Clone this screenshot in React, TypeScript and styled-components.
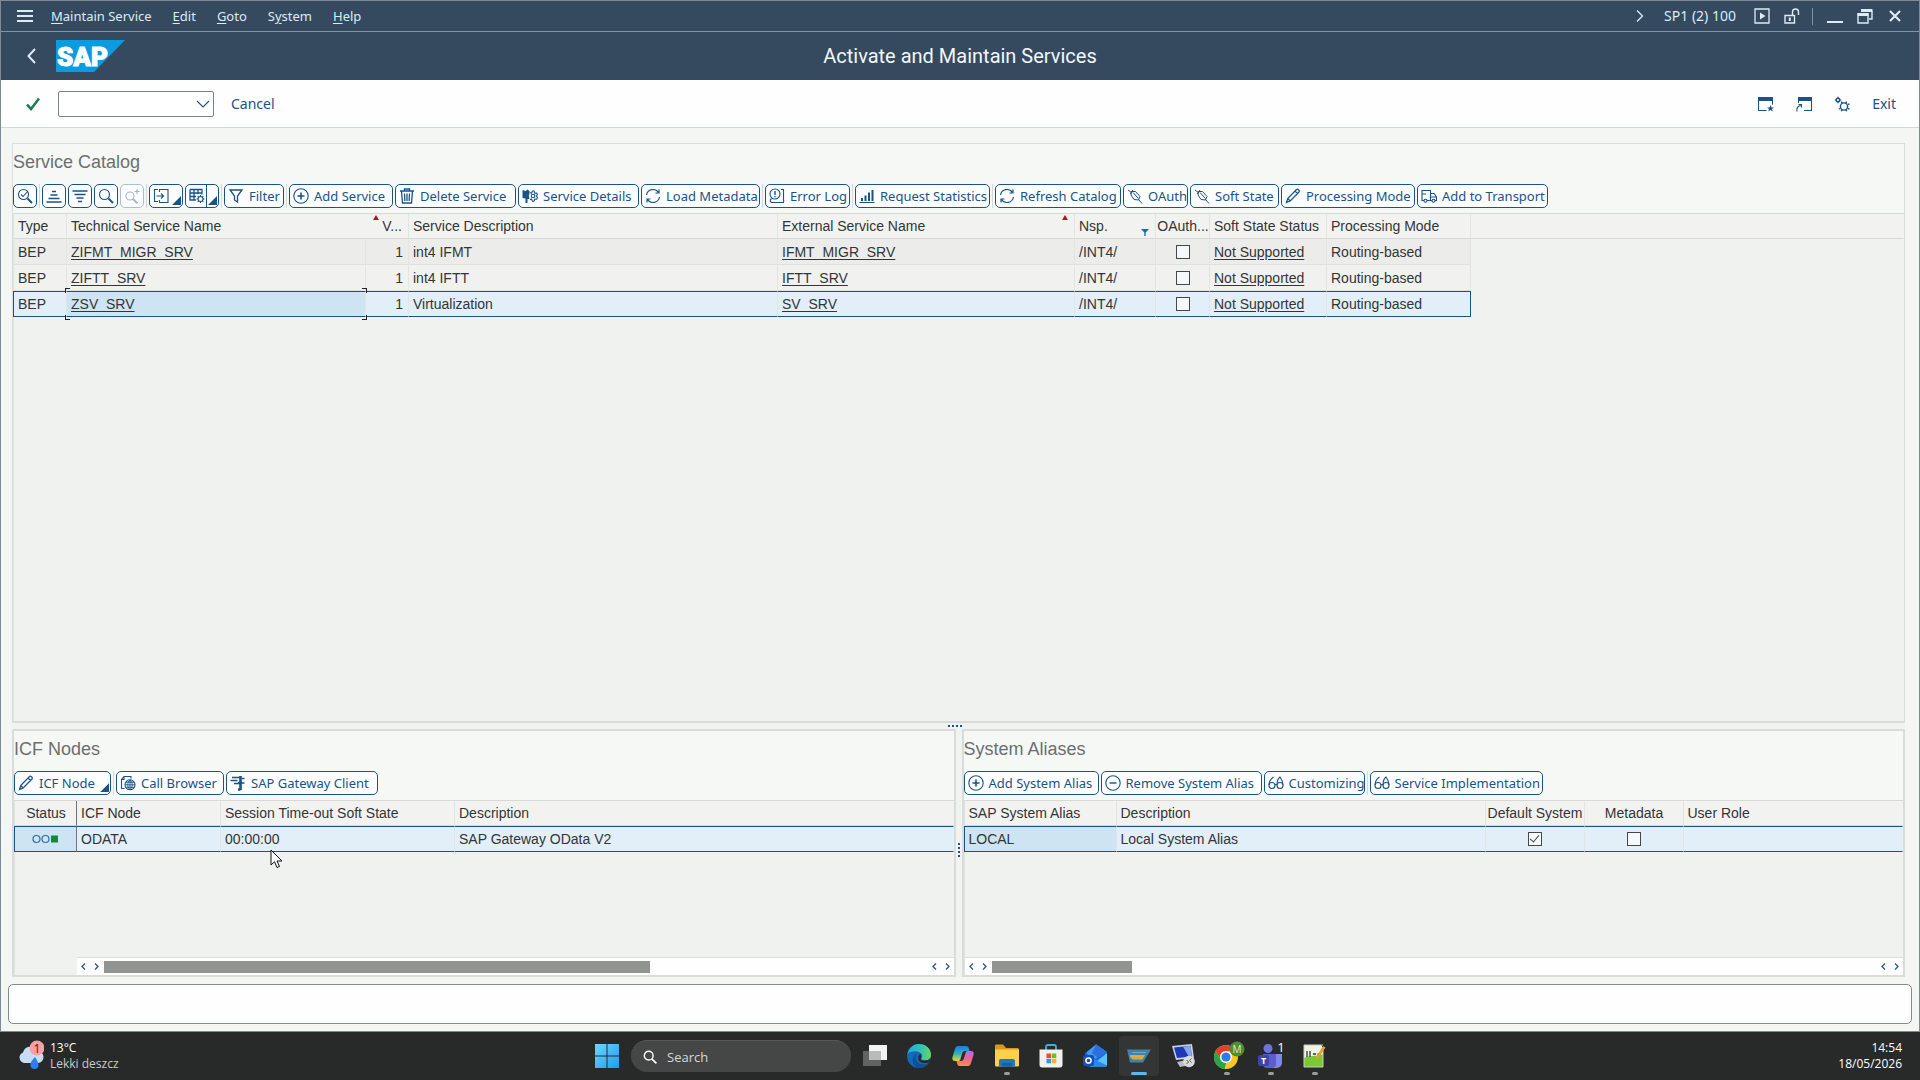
import React from "react";
import styled, { createGlobalStyle, css } from "styled-components";

const blue = "#1b5288";
const ui = `"Noto Sans", "Open Sans", sans-serif`;
const heading = `Roboto, "Open Sans", sans-serif`;
const arial = `"Liberation Sans", Arial, sans-serif`;
const segoe = `"Open Sans", "Noto Sans", sans-serif`;

const Global = createGlobalStyle`
  * { box-sizing: border-box; }
  html, body, #root { height: 100%; }
  body { margin: 0; background: #272a29; font-family: ${arial}; overflow: hidden; }
  button, input, select { font: inherit; margin: 0; }
`;

/* ---------- window ---------- */

const Screen = styled.div`
  display: flex;
  flex-direction: column;
  min-height: 100vh;
`;

const Win = styled.div`
  flex: 1;
  display: flex;
  flex-direction: column;
  border: 1px solid #7d8b99;
  background: #f4f6f4;
  color: #333536;
`;

const MenuBar = styled.header`
  height: 31px;
  display: flex;
  align-items: center;
  justify-content: space-between;
  padding: 0 16px;
  background: #354a5f;
  border-bottom: 1px solid #8296aa;
  color: #dcebf8;
  font: 13px/18px ${ui};
`;

const MenuList = styled.nav`
  display: flex;
  align-items: center;
  gap: 21px;
  & > button:first-child { margin-right: -3px; }
`;

const BareButton = styled.button`
  display: flex;
  align-items: center;
  justify-content: center;
  padding: 0;
  border: 0;
  background: none;
  color: inherit;
  cursor: pointer;
  white-space: nowrap;
  &:disabled { cursor: default; }
`;

const MenuButton = styled(BareButton)`
  display: block;
  u { text-underline-offset: 2px; }
`;

const SessionBar = styled.div`
  display: flex;
  align-items: center;
  gap: 14px;
`;

const SessionName = styled.span`
  margin: 0 4px 0 2px;
  font-size: 14px;
`;

const BarDivider = styled.span`
  width: 1px;
  height: 17px;
  margin-left: -2px;
  background: #7f93a7;
`;

const TitleBar = styled.div`
  height: 48px;
  display: grid;
  grid-template-columns: 1fr auto 1fr;
  align-items: center;
  padding: 0 24px;
  background: #354a5f;
  color: #f2f7fb;
`;

const TitleLeft = styled.div`
  display: flex;
  align-items: center;
  gap: 17px;
  color: #dcebf8;
`;

const AppTitle = styled.h1`
  margin: 0;
  font: 400 20px/28px ${heading};
`;

const CommandBar = styled.div`
  height: 48px;
  display: flex;
  align-items: center;
  justify-content: space-between;
  padding: 0 23px 0 24px;
  background: #fdfefd;
  border-bottom: 1px solid #d3d9d5;
  color: ${blue};
  font: 14px/20px ${ui};
`;

const CommandLeft = styled.div`
  display: flex;
  align-items: center;
  gap: 17px;
`;

const CommandRight = styled.div`
  display: flex;
  align-items: center;
  gap: 22px;
`;

const Combo = styled.div`
  display: grid;
  width: 156px;
  height: 26px;
  align-items: center;
  & > * { grid-area: 1 / 1; }
  & > svg { justify-self: end; margin-right: 4px; pointer-events: none; }
`;

const ComboSelect = styled.select`
  width: 100%;
  height: 100%;
  appearance: none;
  border: 1px solid #7d8286;
  border-radius: 2px;
  background: #fff;
`;

const Main = styled.main`
  flex: 1;
  display: flex;
  flex-direction: column;
  padding: 15px 14px 7px 11px;
`;

const Panel = styled.section<{ $grow: number; $heavy?: boolean }>`
  flex: ${(p) => p.$grow} 1 0;
  min-width: 0;
  display: flex;
  flex-direction: column;
  background: #f6f8f6;
  border: ${(p) => (p.$heavy ? 2 : 1)}px solid #d9dcd9;
  border-bottom-width: 2px;
`;

const PanelTitle = styled.h2`
  margin: 0;
  height: 40px;
  font: 400 18px/37px ${arial};
  color: #6c6f70;
`;

const ToolRow = styled.div`
  display: flex;
  gap: 2px;
  height: 24px;
  margin-bottom: 5px;
`;

const Sep = styled.span`
  width: 1px;
  background: #d5dade;
`;

const ToolButton = styled.button<{ $w: number; $icon?: boolean }>`
  flex: none;
  width: ${(p) => p.$w}px;
  height: 24px;
  display: flex;
  align-items: center;
  gap: ${(p) => (p.$icon ? 1 : 5)}px;
  padding: 0 0 0 3px;
  border: 1px solid ${blue};
  border-radius: 5px;
  background: #fcfeff;
  color: ${blue};
  font: 13px/20px ${ui};
  white-space: nowrap;
  cursor: pointer;
  svg { flex: none; }
  &:disabled { color: #9db6cd; border-color: #a9bfd3; cursor: default; }
`;

const Corner = styled.span`
  flex: none;
  align-self: flex-end;
  margin: 0 1px 2px auto;
  width: 9px;
  height: 9px;
  background: ${blue};
  clip-path: polygon(100% 0, 100% 100%, 0 100%);
`;

const SplitLine = styled.span`
  flex: none;
  align-self: stretch;
  width: 1px;
  background: ${blue};
`;

/* ---------- grids ---------- */

const GridArea = styled.div`
  flex: 1;
  display: flex;
  flex-direction: column;
  background: #f0f2f0;
  border-top: 1px solid #d6d9d6;
  border-left: 1px solid #dfe2df;
`;

const Table = styled.table`
  width: 100%;
  table-layout: fixed;
  border-collapse: separate;
  border-spacing: 0;
  font: 14px/18px ${arial};
`;

type CellProps = { $align?: string; $dark?: boolean; $plain?: boolean };

const cell = css<CellProps>`
  padding: 0 5px 0 4px;
  text-align: ${(p) => p.$align || "left"};
  font-weight: 400;
  white-space: nowrap;
  overflow: hidden;
  border-right: 1px solid ${(p) => (p.$plain ? "transparent" : p.$dark ? "#6f767b" : "#e2e5e2")};
`;

const Th = styled.th<CellProps>`
  ${cell}
  height: 25px;
  padding-right: 0;
  padding-left: ${(p) => (p.$align === "center" ? 1 : 4)}px;
  background: #f2f3f1;
  border-bottom: 1px solid #d6d9d6;
`;

const Td = styled.td<CellProps>`
  ${cell}
  height: 26px;
  border-bottom: 1px solid ${(p) => (p.$plain ? "transparent" : "#dfe1df")};
`;

const Row = styled.tr<{ $shade?: boolean; $selected?: boolean }>`
  ${Td}:not(:last-child) { background: ${(p) => (p.$shade ? "#ecedeb" : "#f1f2f0")}; }
  ${(p) =>
    p.$selected &&
    css`
      ${Td}:not(:last-child) {
        background: #e2eff8;
        border-top: 1px solid ${blue};
        border-bottom: 1px solid ${blue};
      }
      ${Td}:first-child { box-shadow: -1px 0 0 ${blue}; }
    `}
`;

const FullRow = styled(Row)`
  && ${Td} {
    background: #e2eff8;
    border-top: 1px solid ${blue};
    border-bottom: 1px solid ${blue};
  }
  && ${Td}:first-child {
    background: #cfe4f3;
    box-shadow: -1px 0 0 ${blue};
  }
`;

const CheckCell = styled(Td)`
  padding-right: 4px;
`;

const ActiveCell = styled(Td)`
  position: relative;
  overflow: visible;
  ${Row} &&&:not(:last-child) { background: #cfe4f3; }
`;

const EndCell = styled(Td)`
  ${Row} &&& { border-right-color: ${blue}; }
`;

const Bracket = styled.span<{ $v: "top" | "bottom"; $h: "left" | "right" }>`
  position: absolute;
  width: 5px;
  height: 5px;
  border: 0 solid #222;
  ${(p) => p.$v}: -4px;
  ${(p) => p.$h}: -2px;
  border-${(p) => p.$v}-width: 1px;
  border-${(p) => p.$h}-width: 1px;
`;

const HeadFlex = styled.span`
  display: flex;
  align-items: center;
  justify-content: space-between;
  height: 24px;
  padding-right: 6px;
  & > svg { align-self: flex-end; }
`;

const SortMark = styled.span`
  align-self: flex-start;
  margin: 1px 0 0 3px;
  border: solid transparent;
  border-width: 0 3px 5px;
  border-bottom-color: #b3142b;
`;

const CellLink = styled.a`
  color: inherit;
  text-decoration: underline;
  text-underline-offset: 2px;
`;

const Check = styled.input.attrs({ type: "checkbox" })`
  appearance: none;
  display: block;
  width: 14px;
  height: 14px;
  margin: 0 auto;
  border: 1px solid #44484b;
  background: #f6f8f9;
  &:checked::after {
    content: "";
    display: block;
    width: 4px;
    height: 8px;
    margin: 0 auto;
    border: solid #44484b;
    border-width: 0 1px 1px 0;
    transform: rotate(40deg);
  }
`;

const Lamps = styled.span`
  display: flex;
  align-items: center;
  justify-content: center;
`;

/* ---------- splitters and scroll bars ---------- */

const Dots = styled.div<{ $vertical?: boolean }>`
  flex: none;
  display: flex;
  flex-direction: ${(p) => (p.$vertical ? "column" : "row")};
  align-items: center;
  justify-content: center;
  gap: 2px;
  ${(p) => (p.$vertical ? "width: 6px; padding-bottom: 6px;" : "height: 6px; padding-right: 8px;")}
  background: #f1f3f1;
  i { width: 2px; height: 2px; background: ${blue}; }
`;

const Lower = styled.div`
  flex: 249 1 0;
  display: flex;
`;

const ScrollRow = styled.div<{ $inset: number }>`
  display: flex;
  align-items: center;
  height: 18px;
  margin-top: auto;
  margin-left: ${(p) => p.$inset}px;
  border-top: 1px solid #dcdfdc;
  background: #fdfefd;
  color: #3b5a78;
`;

const Arrow = styled(BareButton)`
  width: 13px;
  height: 13px;
`;

const Track = styled.div`
  flex: 1;
  margin: 0 9px 0 1px;
`;

const Thumb = styled.div`
  height: 12px;
  background: #929491;
`;

const StatusBar = styled.footer`
  height: 40px;
  margin: 0 7px 7px;
  border: 1px solid #868b8e;
  border-radius: 5px;
  background: #fdfefd;
`;

/* ---------- taskbar ---------- */

const Taskbar = styled.footer`
  height: 48px;
  display: grid;
  grid-template-columns: 1fr auto 1fr;
  align-items: center;
  background: #272a29;
  color: #fff;
  font: 12px/16px ${segoe};
`;

const Weather = styled(BareButton)`
  justify-self: start;
  padding-left: 18px;
  gap: 6px;
  text-align: left;
`;

const Dim = styled.span`
  display: block;
  color: #c9cbca;
`;

const Dock = styled.div`
  display: flex;
  align-items: center;
  height: 100%;
  padding-left: 2px;
`;

const DockItem = styled(BareButton)<{ $mark?: "dot" | "bar" }>`
  position: relative;
  width: 44px;
  height: 48px;
  ${(p) =>
    p.$mark &&
    css`
      &::after {
        content: "";
        position: absolute;
        bottom: 5px;
        width: ${p.$mark === "bar" ? 16 : 6}px;
        height: 3px;
        border-radius: 2px;
        background: ${p.$mark === "bar" ? "#5fb8ea" : "#9a9c9b"};
      }
    `}
  ${(p) =>
    p.$mark === "bar" &&
    css`
      width: 40px;
      height: 40px;
      margin: 0 2px;
      border-radius: 4px;
      background: #333635;
      &::after { bottom: 1px; }
    `}
`;

const SearchBox = styled.label`
  display: flex;
  align-items: center;
  gap: 10px;
  width: 220px;
  height: 32px;
  margin: 0 2px;
  padding: 0 12px;
  border-radius: 16px;
  background: #454746;
  border-top: 1px solid #575958;
  input {
    width: 100%;
    border: 0;
    outline: 0;
    padding: 0;
    background: none;
    color: #fff;
    font: 13px/20px ${segoe};
  }
  input::placeholder { color: #d6d7d6; opacity: 1; }
`;

const Clock = styled(BareButton)`
  display: block;
  justify-self: end;
  padding-right: 18px;
  text-align: right;
`;

const Pointer = styled.svg`
  position: fixed;
  left: 270px;
  top: 849px;
  pointer-events: none;
`;

/* ---------- icons ---------- */

const I = ({ children, w = 16, h = 16, sw = 1.1 }: { children: React.ReactNode; w?: number; h?: number; sw?: number }) => (
  <svg width={w} height={h} viewBox={`0 0 ${w} ${h}`} fill="none" stroke="currentColor" strokeWidth={sw} aria-hidden="true">
    {children}
  </svg>
);

const icons = {
  details: (
    <I><circle cx="6.5" cy="6.5" r="5" /><path d="M4 6.5l2 2 5-5.5" /><path d="M10.5 10.5l4.500 4.500" strokeWidth="2" /></I>
  ),
  sortUp: <I><path d="M6 3.500h4M4.500 7h7M2.500 10.500h11M0.500 14h15" strokeWidth="1.300" /></I>,
  sortDown: <I><path d="M0.500 3h15M2.500 6.500h11M4.500 10h7M6 13.500h4" strokeWidth="1.300" /></I>,
  find: <I><circle cx="6.500" cy="6.500" r="5" /><path d="M10.500 10.500l4.500 4.500" strokeWidth="2" /></I>,
  findNext: <I><circle cx="6" cy="8" r="4" /><path d="M9 11l4.500 4.500" strokeWidth="1.800" /><path d="M13 1v5M10.500 3.500h5" /></I>,
  exportIcon: <I><path d="M5 1.500H1.500v12H5M6.500 4V1.500h8.500v13H6.500V12M3.500 8h7M8 5.500L10.500 8 8 10.500" /></I>,
  layout: (
    <I><path d="M1 1.500h12v5M1 1.500v10.500h6M1 5h12M1 8.500h6M5 1.500V12M9 1.500V6" strokeWidth="1.300" /><circle cx="11.500" cy="11" r="2.500" /><path d="M11.500 7v1.500M11.500 13.500V15M7.500 11H9M14 11h1.500M8.700 8.200l1 1M13.300 12.800l1 1M14.300 8.200l-1 1M9.700 12.800l-1 1" /></I>
  ),
  filter: <I><path d="M2 2h12L9.500 8v6L6.500 12V8z" strokeWidth="1.300" /></I>,
  add: <I><circle cx="8" cy="8" r="7.200" /><path d="M8 4.500v7M4.500 8h7" strokeWidth="1.600" /></I>,
  remove: <I><circle cx="8" cy="8" r="7.200" /><path d="M4.500 8h7" strokeWidth="1.400" /></I>,
  trash: <I><path d="M1 3h14M5.500 3V1h5v2M2.500 3l1 12h9l1-12M5.500 5.500l.4 7.500M8 5.500V13M10.500 5.500l-.4 7.500" strokeWidth="1.300" /></I>,
  serviceDetails: (
    <I><path d="M0.500 2l3 1 2-1.500 2 1.500v3L6.800 7.500 7.500 11H5.500v4h-2v-4.500l-3-.5z" fill="currentColor" stroke="none" /><circle cx="11" cy="8" r="1.800" /><path d="M8 4.500l1.500.7 1-2.200h1.500l.7 2.200 2-.2.800 1.500-1.300 1.500 1.300 1.500-.8 1.700-2-.2-.7 2.200h-1.500l-1-2.200-1.500.7" /></I>
  ),
  refresh: <I><path d="M1.500 7a6.600 6.600 0 0 1 12-2.500M14 1.500v3.500h-3.500M14.500 9a6.600 6.600 0 0 1-12 2.500M2 14.500V11h3.500" strokeWidth="1.200" /></I>,
  errorLog: <I><path d="M12 1.500h2.500v10c0 1 .5 1.500 0 3H2.500c-1.200-.5-1.500-1.500-1-3l1-1" /><circle cx="6" cy="6" r="5" /><path d="M6 3v4M6 8v1.200" strokeWidth="1.400" /></I>,
  stats: <I><path d="M0.500 14.500h15" /><path d="M3 13v-3M6.500 13V7.500M10 13V4.500M13.500 13V2" strokeWidth="2" /></I>,
  plug: <I><path d="M1 2l3.500 2.500M4.500 3.500h4l4.500 5-1.500 3.500-4.500-.5-3-4.500zM6 2l-3 4M11 11l4 4.500M6 4.500l5.500 6" strokeWidth="1" /></I>,
  pencil: <I><path d="M1.500 14.500l1.200-4L11.500 1.500c1.200-1 3.500 1 2.500 2.500L5.200 13zM10 3l2.800 2.800M2.700 10.500L5.200 13" strokeWidth="1.200" /></I>,
  truck: <I><path d="M3 12.500H1V2.500h8.500v10H6M9.500 5.500h3.500l2.500 3.500v3.500h-1.500M9.500 12.500H11M9.500 9h6M1 6h4" /><circle cx="4.500" cy="12.800" r="1.500" /><circle cx="12.500" cy="12.800" r="1.500" /></I>,
  browser: <I><path d="M4.500 13.500h-3v-9L4 1.500h7v2M1.500 4.500H4V1.500" /><circle cx="10" cy="9.800" r="5" /><path d="M5 9.800h10M10 4.800v10M6 7.200h8M6 12.300h8M10 4.800c-3 3-3 7 0 10M10 4.800c3 3 3 7 0 10" strokeWidth=".9" /></I>,
  gateway: <I><path d="M2 2.500h8M0.500 5.500h7M4 8.500h4" strokeWidth="1.500" /><path d="M10.500 1v14M8 8h4M10.500 14.500H8" strokeWidth="2.600" /><path d="M12 3.500h2.500M12 8h2.500" strokeWidth="1.400" /></I>,
  glasses: <I><circle cx="4" cy="10.500" r="3" /><circle cx="12" cy="10.500" r="3" /><path d="M7 10c.5-.7 1.500-.7 2 0M1 10c0-3 1.500-6 4.500-8M9 10c0-4 1-6.500 3-8 1.500 2 3 5 3 8" /></I>,
};

const chevronDown = <I w={14} h={14}><path d="M1 4l6 6 6-6" /></I>;
const left = <I w={9} h={9} sw={1.4}><path d="M6 1.500L3 4.500l3 3" /></I>;
const right = <I w={9} h={9} sw={1.4}><path d="M3 1.500l3 3-3 3" /></I>;

/* ---------- content ---------- */

const menus = [
  ["", "M", "aintain Service"],
  ["", "E", "dit"],
  ["", "G", "oto"],
  ["S", "y", "stem"],
  ["", "H", "elp"],
];

type Tool = { label: string; icon: React.ReactNode; w: number; menu?: boolean } | null;

const catalogTools: Tool[] = [
  { label: "Filter", icon: icons.filter, w: 60 },
  null,
  { label: "Add Service", icon: icons.add, w: 104 },
  { label: "Delete Service", icon: icons.trash, w: 121 },
  { label: "Service Details", icon: icons.serviceDetails, w: 121 },
  { label: "Load Metadata", icon: icons.refresh, w: 119 },
  null,
  { label: "Error Log", icon: icons.errorLog, w: 85 },
  null,
  { label: "Request Statistics", icon: icons.stats, w: 135 },
  null,
  { label: "Refresh Catalog", icon: icons.refresh, w: 126 },
  { label: "OAuth", icon: icons.plug, w: 65 },
  { label: "Soft State", icon: icons.plug, w: 89 },
  { label: "Processing Mode", icon: icons.pencil, w: 134 },
  { label: "Add to Transport", icon: icons.truck, w: 131 },
];

const nodeTools: Tool[] = [
  { label: "ICF Node", icon: icons.pencil, w: 97, menu: true },
  null,
  { label: "Call Browser", icon: icons.browser, w: 108 },
  { label: "SAP Gateway Client", icon: icons.gateway, w: 152 },
];

const aliasTools: Tool[] = [
  { label: "Add System Alias", icon: icons.add, w: 135 },
  { label: "Remove System Alias", icon: icons.remove, w: 161 },
  { label: "Customizing", icon: icons.glasses, w: 101 },
  null,
  { label: "Service Implementation", icon: icons.glasses, w: 173 },
];

const services = [
  { name: "ZIFMT_MIGR_SRV", desc: "int4 IFMT", ext: "IFMT_MIGR_SRV" },
  { name: "ZIFTT_SRV", desc: "int4 IFTT", ext: "IFTT_SRV" },
  { name: "ZSV_SRV", desc: "Virtualization", ext: "SV_SRV" },
];

const Tools = ({ items }: { items: Tool[] }) => (
  <>
    {items.map((t, i) =>
      t ? (
        <ToolButton key={i} $w={t.w}>
          {t.icon}
          {t.label}
          {t.menu && <Corner />}
        </ToolButton>
      ) : (
        <Sep key={i} />
      )
    )}
  </>
);

const Cols = ({ widths }: { widths: number[] }) => (
  <colgroup>
    {widths.map((w, i) => (
      <col key={i} style={{ width: w }} />
    ))}
    <col />
  </colgroup>
);

const Scroll = ({ inset, size }: { inset: number; size: number }) => (
  <ScrollRow $inset={inset}>
    <Arrow aria-label="Scroll to start">{left}</Arrow>
    <Arrow aria-label="Scroll left">{right}</Arrow>
    <Track>
      <Thumb style={{ width: `${size}%` }} />
    </Track>
    <Arrow aria-label="Scroll right">{left}</Arrow>
    <Arrow aria-label="Scroll to end">{right}</Arrow>
  </ScrollRow>
);

const SapLogo = () => (
  <svg width="69" height="32" viewBox="0 0 69 32" role="img" aria-label="SAP">
    <path d="M0 0h69L38 32H0z" fill="#0a9be0" />
    <text x="1" y="26" fill="#fff" stroke="#fff" strokeWidth="1" fontFamily="Roboto" fontWeight="900" fontSize="26">SAP</text>
  </svg>
);

const ServiceCatalog = () => (
  <Panel $grow={580}>
    <PanelTitle>Service Catalog</PanelTitle>
    <ToolRow>
      <ToolButton $w={24} aria-label="Details">{icons.details}</ToolButton>
      <Sep />
      <ToolButton $w={24} aria-label="Sort ascending">{icons.sortUp}</ToolButton>
      <ToolButton $w={24} aria-label="Sort descending">{icons.sortDown}</ToolButton>
      <ToolButton $w={24} aria-label="Find">{icons.find}</ToolButton>
      <ToolButton $w={24} aria-label="Find next" disabled>{icons.findNext}</ToolButton>
      <Sep />
      <ToolButton $w={34} $icon aria-label="Export">{icons.exportIcon}<Corner /></ToolButton>
      <ToolButton $w={34} $icon aria-label="Layout">
        {icons.layout}
        <SplitLine />
        <Corner />
      </ToolButton>
      <Sep />
      <Tools items={catalogTools} />
    </ToolRow>
    <GridArea>
      <Table>
        <Cols widths={[53, 299, 43, 369, 297, 81, 54, 117, 144]} />
        <thead>
          <tr>
            <Th>Type</Th>
            <Th $plain>Technical Service Name</Th>
            <Th><HeadFlex><SortMark />V...</HeadFlex></Th>
            <Th>Service Description</Th>
            <Th><HeadFlex>External Service Name<SortMark /></HeadFlex></Th>
            <Th>
              <HeadFlex>
                Nsp.
                <svg width="8" height="9" viewBox="0 0 8 9" aria-hidden="true"><path d="M0 0h8L4.700 3.500V7H3.300V3.500z" fill="#1f66ae" /></svg>
              </HeadFlex>
            </Th>
            <Th $align="center">OAuth...</Th>
            <Th>Soft State Status</Th>
            <Th>Processing Mode</Th>
            <Th $plain />
          </tr>
        </thead>
        <tbody>
          {services.map((s, i) => {
            const Name = i === 2 ? ActiveCell : Td;
            const End = i === 2 ? EndCell : Td;
            return (
              <Row key={s.name} $shade={i === 0} $selected={i === 2}>
                <Td>BEP</Td>
                <Name>
                  <CellLink href="#service">{s.name}</CellLink>
                  {i === 2 && (
                    <>
                      <Bracket $v="top" $h="left" />
                      <Bracket $v="top" $h="right" />
                      <Bracket $v="bottom" $h="left" />
                      <Bracket $v="bottom" $h="right" />
                    </>
                  )}
                </Name>
                <Td $align="right">1</Td>
                <Td>{s.desc}</Td>
                <Td><CellLink href="#external">{s.ext}</CellLink></Td>
                <Td>/INT4/</Td>
                <CheckCell><Check aria-label={`OAuth for ${s.name}`} /></CheckCell>
                <Td><CellLink href="#state">Not Supported</CellLink></Td>
                <End>Routing-based</End>
                <Td $plain />
              </Row>
            );
          })}
        </tbody>
      </Table>
    </GridArea>
  </Panel>
);

const IcfNodes = () => (
  <Panel $grow={1} $heavy>
    <PanelTitle>ICF Nodes</PanelTitle>
    <ToolRow><Tools items={nodeTools} /></ToolRow>
    <GridArea>
      <Table>
        <Cols widths={[62, 144, 234]} />
        <thead>
          <tr>
            <Th $dark $align="center">Status</Th>
            <Th>ICF Node</Th>
            <Th>Session Time-out Soft State</Th>
            <Th $plain>Description</Th>
          </tr>
        </thead>
        <tbody>
          <FullRow>
            <Td $dark>
              <Lamps>
                <svg width="26" height="10" viewBox="0 0 26 10" role="img" aria-label="Active">
                  <g fill="none" stroke="#2f6d9f" strokeWidth="1.200"><circle cx="4.500" cy="5" r="3.500" /><circle cx="13.500" cy="5" r="3.500" /></g>
                  <path d="M19 1.500h7v7h-7z" fill="#188541" />
                </svg>
              </Lamps>
            </Td>
            <Td>ODATA</Td>
            <Td>00:00:00</Td>
            <Td $plain>SAP Gateway OData V2</Td>
          </FullRow>
        </tbody>
      </Table>
      <Scroll inset={62} size={67} />
    </GridArea>
  </Panel>
);

const SystemAliases = () => (
  <Panel $grow={1} $heavy>
    <PanelTitle>System Aliases</PanelTitle>
    <ToolRow><Tools items={aliasTools} /></ToolRow>
    <GridArea>
      <Table>
        <Cols widths={[152, 369, 99, 99]} />
        <thead>
          <tr>
            <Th>SAP System Alias</Th>
            <Th>Description</Th>
            <Th $align="center">Default System</Th>
            <Th $align="center">Metadata</Th>
            <Th $plain>User Role</Th>
          </tr>
        </thead>
        <tbody>
          <FullRow>
            <Td>LOCAL</Td>
            <Td>Local System Alias</Td>
            <CheckCell><Check aria-label="Default system" defaultChecked /></CheckCell>
            <CheckCell><Check aria-label="Metadata" /></CheckCell>
            <Td $plain />
          </FullRow>
        </tbody>
      </Table>
      <Scroll inset={0} size={16} />
    </GridArea>
  </Panel>
);

const Art = ({ children }: { children: React.ReactNode }) => (
  <svg width="26" height="26" viewBox="0 0 26 26" aria-hidden="true">{children}</svg>
);

const dock: { label: string; mark?: "dot" | "bar"; art: React.ReactNode }[] = [
  {
    label: "Task view",
    art: (
      <Art>
        <path d="M7 2h18v15H7z" fill="#f3f3f3" />
        <path d="M1 8h18v15H1z" fill="#6b6d6c" opacity=".85" />
        <path d="M7 8h12v9H7z" fill="#b9bab9" />
      </Art>
    ),
  },
  {
    label: "Edge",
    art: (
      <Art>
        <defs>
          <linearGradient id="edgeTop" x1="0" x2="1"><stop offset="0" stopColor="#27a7df" /><stop offset=".6" stopColor="#35c3b3" /><stop offset="1" stopColor="#6ad95a" /></linearGradient>
        </defs>
        <circle cx="13" cy="13" r="12" fill="#1169b8" />
        <path d="M1.500 11C3 4 8 1 13 1c7 0 12 5 12 10.500 0 4-3 6-6 6s-4.500-1-3.500-2.500C17 13 15 9 11 8.500 7 8 3 9 1.500 11z" fill="url(#edgeTop)" />
        <path d="M11 10.500c-3 3-1 9 3.500 10.500 3 1 6 .5 8.500-1.500C20 24 16 25.500 12 25c-4-.7-6-6-5-9.500.6-2.500 2-4.500 4-5z" fill="#0f4f97" />
        <path d="M14.500 10.500c1.500 1.500 1 3.500.5 4.500-.8 1.500 1 2.500 3.500 2.500 3 0 5-.8 6-2.500l-1 4c-3 1.500-8 2-10.500-1.500-1.500-2.500-.5-5.500 1.500-7z" fill="#272a29" />
      </Art>
    ),
  },
  {
    label: "Copilot",
    art: (
      <Art>
        <defs>
          <linearGradient id="copA" x2="0" y2="1"><stop offset="0" stopColor="#2376e8" /><stop offset=".5" stopColor="#2fb4b8" /><stop offset="1" stopColor="#e8d52f" /></linearGradient>
          <linearGradient id="copB" x2="0" y2="1"><stop offset="0" stopColor="#b46be8" /><stop offset=".5" stopColor="#f0609a" /><stop offset="1" stopColor="#f79240" /></linearGradient>
        </defs>
        <path d="M8 3h8c2 0 2.500 1 3 3l.5 2h-4c-2 0-3 1-3.500 3l-1.500 5c-.5 1.500-1 2-2.500 2H5c-2.500 0-3-2-2.500-4l2.500-8c.6-2 1.500-3 3-3z" fill="url(#copA)" />
        <path d="M18 23h-8c-2 0-2.500-1-3-3l-.5-2h4c2 0 3-1 3.500-3l1.500-5c.5-1.500 1-2 2.500-2H21c2.500 0 3 2 2.500 4L21 20c-.6 2-1.500 3-3 3z" fill="url(#copB)" />
      </Art>
    ),
  },
  {
    label: "File Explorer",
    mark: "dot",
    art: (
      <Art>
        <path d="M1 3c0-1 .5-1.500 1.500-1.500H9L12 5h11c1 0 2 .5 2 1.500V12H1z" fill="#d99a1c" />
        <path d="M1 6.500h24V22c0 1-.5 1.500-1.500 1.500h-21C1.500 23.500 1 23 1 22z" fill="#fcd04d" />
        <path d="M5 18c0-1.500 1-2 2-2h12c1 0 2 .5 2 2v5.500H5z" fill="#1a79c4" />
        <path d="M8 20h10v3.500H8z" fill="#1561a3" />
      </Art>
    ),
  },
  {
    label: "Store",
    art: (
      <Art>
        <path d="M8 7V4c0-1.500.8-2 2-2h6c1.200 0 2 .5 2 2v3" fill="none" stroke="#38b0e6" strokeWidth="1.800" />
        <path d="M1.500 6.500h23V22c0 1.500-1 2.500-2.500 2.500H4c-1.500 0-2.500-1-2.500-2.500z" fill="#f0f0ee" />
        <path d="M8.500 10.500H13V15H8.500z" fill="#e8502c" /><path d="M13.800 10.500h4.500V15h-4.500z" fill="#79b72a" />
        <path d="M8.500 15.800H13v4.500H8.500z" fill="#2a9be0" /><path d="M13.800 15.800h4.500v4.500h-4.500z" fill="#f4b51e" />
      </Art>
    ),
  },
  {
    label: "Outlook",
    art: (
      <Art>
        <path d="M3 10L14 1.500 25 9v13c0 1-.6 1.500-1.500 1.500H5z" fill="#1769cf" />
        <path d="M5 9l9-7.500L22 7l-8 9-9-5z" fill="#3f9af0" />
        <path d="M14 1.500L25 9l-9 6-6-5z" fill="#2c6fe0" />
        <path d="M25 10v12c0 1-.6 1.500-1.500 1.500H8z" fill="#5cc3fa" />
        <path d="M10 15l15 7.500c-.4.700-.9 1-1.500 1H8z" fill="#2f86e8" />
        <rect x="1" y="12" width="11" height="11" rx="2" fill="#1450b4" />
        <circle cx="6.500" cy="17.500" r="2.600" fill="none" stroke="#fff" strokeWidth="1.500" />
      </Art>
    ),
  },
  {
    label: "SAP Logon",
    mark: "bar",
    art: (
      <Art>
        <path d="M1 6.500h24L17 19.500H4z" fill="#3f83a6" />
        <path d="M4 12h15l-2.500 4.500H7L4 14z" fill="#e3a83a" />
        <path d="M6 9.500h14" stroke="#74a9c2" strokeWidth="1" />
      </Art>
    ),
  },
  {
    label: "Remote Desktop",
    art: (
      <Art>
        <path d="M2 3l20-2 2 14-18 2z" fill="#c9d3e4" />
        <path d="M4 4.500l16.500-1.700L22 13.500 7 15z" fill="#2038b8" />
        <path d="M13 3.700l7.500-.9L22 13.500l-3 .3z" fill="#8aa5ee" />
        <path d="M7 19l9-2 4 5-10 2z" fill="#b9bdc4" />
        <circle cx="19" cy="18.500" r="5.800" fill="#dadcdb" />
        <path d="M16.500 17l2 2-2 2M21.500 15.500l-2 2 2 2" stroke="#555" fill="none" />
      </Art>
    ),
  },
  {
    label: "Chrome",
    mark: "dot",
    art: (
      <svg width="36" height="30" viewBox="-5 0 36 30" aria-hidden="true">
        <circle cx="12" cy="16" r="12" fill="#f9c71f" />
        <path d="M1.600 10A12 12 0 0 1 22.400 10H12a6 6 0 0 0-5.200 9z" fill="#e2412e" />
        <path d="M1.600 10l5.200 9a6 6 0 0 0 5.200 3l-1.500 6A12 12 0 0 1 1.600 10z" fill="#2ba24c" />
        <circle cx="12" cy="16" r="6" fill="#fff" /><circle cx="12" cy="16" r="4.600" fill="#2b7de9" />
        <circle cx="23" cy="8" r="7.500" fill="#4f8a34" />
        <text x="23" y="11.500" textAnchor="middle" fontFamily="Open Sans" fontSize="10" fill="#dcebd2">M</text>
      </svg>
    ),
  },
  {
    label: "Teams",
    mark: "dot",
    art: (
      <svg width="34" height="40" viewBox="-3 -6 34 40" aria-hidden="true">
        <circle cx="11" cy="6.500" r="4.500" fill="#6f74dc" />
        <path d="M10 12h15v9c0 3-3 5-6 5h-9z" fill="#8187ea" />
        <path d="M6 12h13v10c0 2.500-2 4-4.500 4H10c-2.500 0-4-1.500-4-4z" fill="#5a5fc9" />
        <rect x="1" y="13" width="11" height="11" rx="2" fill="#3f44a8" />
        <text x="6.500" y="22" textAnchor="middle" fontFamily="Open Sans" fontSize="9" fontWeight="700" fill="#fff">T</text>
        <text x="24" y="10" textAnchor="middle" fontFamily="Open Sans" fontSize="13" fill="#fff">1</text>
      </svg>
    ),
  },
  {
    label: "Notepad++",
    mark: "dot",
    art: (
      <Art>
        <path d="M2 2h17l2 3v19H2z" fill="#eef3e4" />
        <path d="M2 15c6-3 12-1 19-4v13H2z" fill="#7cc832" />
        <path d="M2 2h19M2 24h19M2 2v22M21 4v20" stroke="#c9cfc0" fill="none" />
        <path d="M5 8v6M8 8v6M11 11h3M15.500 11h3" stroke="#333" strokeWidth="1.300" />
        <path d="M14 14l7-11 2.500 1.500-7 10.500-3 1.500z" fill="#d9a431" />
      </Art>
    ),
  },
];

export default function App() {
  return (
    <Screen>
      <Global />
      <Win>
        <MenuBar>
          <MenuList aria-label="Menu">
            <BareButton aria-label="Open menu"><I w={16} h={14} sw={2}><path d="M0 2h16M0 7h16M0 12h16" /></I></BareButton>
            {menus.map(([a, u, b]) => (
              <MenuButton key={b}>{a}<u>{u}</u>{b}</MenuButton>
            ))}
          </MenuList>
          <SessionBar>
            <BareButton aria-label="More"><I w={16} h={14} sw={1.3}><path d="M5 1.500L10.500 7 5 12.500" /></I></BareButton>
            <SessionName>SP1 (2) 100</SessionName>
            <BareButton aria-label="Record"><I sw={1.3}><path d="M1 1h14v14H1z" /><path d="M6 4.500L11.500 8 6 11.500z" fill="currentColor" stroke="none" /></I></BareButton>
            <BareButton aria-label="Lock"><I sw={1.4}><path d="M1 7.500h9.500v7.500H1zM8.500 7.500V4a3 3 0 0 1 6 0v3" /><path d="M5.800 9.500v3.500" strokeWidth="2" /></I></BareButton>
            <BarDivider />
            <BareButton aria-label="Minimize"><I sw={2}><path d="M0 14h16" /></I></BareButton>
            <BareButton aria-label="Restore"><I sw={1.4}><path d="M1 6h10v9H1z" /><path d="M0.500 6.500h11M4 2.500h11.500" strokeWidth="3" /><path d="M15 3v8h-3" /></I></BareButton>
            <BareButton aria-label="Close"><I sw={2.200}><path d="M3 3l10 10M13 3L3 13" /></I></BareButton>
          </SessionBar>
        </MenuBar>
        <TitleBar>
          <TitleLeft>
            <BareButton aria-label="Back"><I w={14} h={18} sw={2}><path d="M10 2L3.500 9l6.500 7" /></I></BareButton>
            <SapLogo />
          </TitleLeft>
          <AppTitle>Activate and Maintain Services</AppTitle>
        </TitleBar>
        <CommandBar>
          <CommandLeft>
            <BareButton aria-label="Enter"><svg width="16" height="16" viewBox="0 0 16 16" aria-hidden="true"><path d="M2 8.500l4 4.500L14 2.500" fill="none" stroke="#1e7a50" strokeWidth="2.500" /></svg></BareButton>
            <Combo>
              <ComboSelect aria-label="Command"><option value="" /></ComboSelect>
              {chevronDown}
            </Combo>
            <BareButton>Cancel</BareButton>
          </CommandLeft>
          <CommandRight>
            <BareButton aria-label="New window"><I><path d="M8.500 14.500h-8V2h14v6.500" /><path d="M0 3h15" strokeWidth="4" /><path d="M12.500 9l1 2.400 2.500.1-2 1.600.8 2.400-2.300-1.400-2.200 1.400.7-2.400-2-1.600 2.500-.1z" fill="currentColor" stroke="none" /></I></BareButton>
            <BareButton aria-label="Create shortcut"><I><path d="M2.500 7V2h13v12.500H8" /><path d="M2 3h14" strokeWidth="4" /><path d="M1 15.500c-.5-3 .5-6 4-6M2.500 8.500H5.500v3" /></I></BareButton>
            <BareButton aria-label="Settings"><I sw={1.400}><circle cx="4" cy="4" r="1.800" /><path d="M4 .8v1.400M4 5.800v1.400M.8 4h1.400M5.800 4h1.400" strokeWidth="1.200" /><circle cx="10" cy="10.500" r="3.600" /><path d="M7.500 5.500L8 7.500M12.500 5.500L12 7.500M14 8.500l1.500-.7M14 12.500l1.500.7M8 13.500l-.8 1.800M12 13.500l.8 1.800M6 12.500l-1.200.7" /></I></BareButton>
            <BareButton>Exit</BareButton>
          </CommandRight>
        </CommandBar>
        <Main>
          <ServiceCatalog />
          <Dots><i /><i /><i /><i /></Dots>
          <Lower>
            <IcfNodes />
            <Dots $vertical><i /><i /><i /><i /></Dots>
            <SystemAliases />
          </Lower>
        </Main>
        <StatusBar />
      </Win>
      <Taskbar>
        <Weather>
          <svg width="26" height="32" viewBox="0 0 26 32" aria-hidden="true">
            <path d="M6 23a5.500 5.500 0 0 1-1-10.500A7.500 7.500 0 0 1 19 11a6 6 0 0 1 1 12z" fill="#c9dcf5" />
            <path d="M17 17c-4 4-4.500 6-4.500 8a4 4 0 0 0 8 0c0-2-1.500-5-3.500-8z" fill="#2f7df0" />
            <circle cx="19" cy="8" r="7.500" fill="#f9a0a4" />
            <text x="19" y="12.500" textAnchor="middle" fontFamily="Open Sans" fontSize="12" fill="#3a1c1e">1</text>
          </svg>
          <span>13°C<Dim>Lekki deszcz</Dim></span>
        </Weather>
        <Dock>
          <DockItem aria-label="Start">
            <svg width="24" height="24" viewBox="0 0 24 24" aria-hidden="true">
              <defs><linearGradient id="win" x2="1" y2="1"><stop offset="0" stopColor="#6fd6fb" /><stop offset="1" stopColor="#1c9cf0" /></linearGradient></defs>
              <path d="M0 0h11.500v11.500H0zM12.500 0H24v11.500H12.500zM0 12.500h11.500V24H0zM12.500 12.500H24V24H12.500z" fill="url(#win)" />
            </svg>
          </DockItem>
          <SearchBox>
            <I sw={1.600}><circle cx="6.500" cy="6.500" r="5" /><path d="M10.300 10.300l5 5" strokeWidth="2" /></I>
            <input type="text" placeholder="Search" aria-label="Search" />
          </SearchBox>
          {dock.map((d) => (
            <DockItem key={d.label} aria-label={d.label} $mark={d.mark}>{d.art}</DockItem>
          ))}
        </Dock>
        <Clock>14:54<br />18/05/2026</Clock>
      </Taskbar>
      <Pointer width="13" height="20" viewBox="0 0 13 20" aria-hidden="true">
        <path d="M1 1v15l3.500-3.300L7 18.500l2.500-1L7 12h5z" fill="#fff" stroke="#111" strokeWidth="1" />
      </Pointer>
    </Screen>
  );
}
